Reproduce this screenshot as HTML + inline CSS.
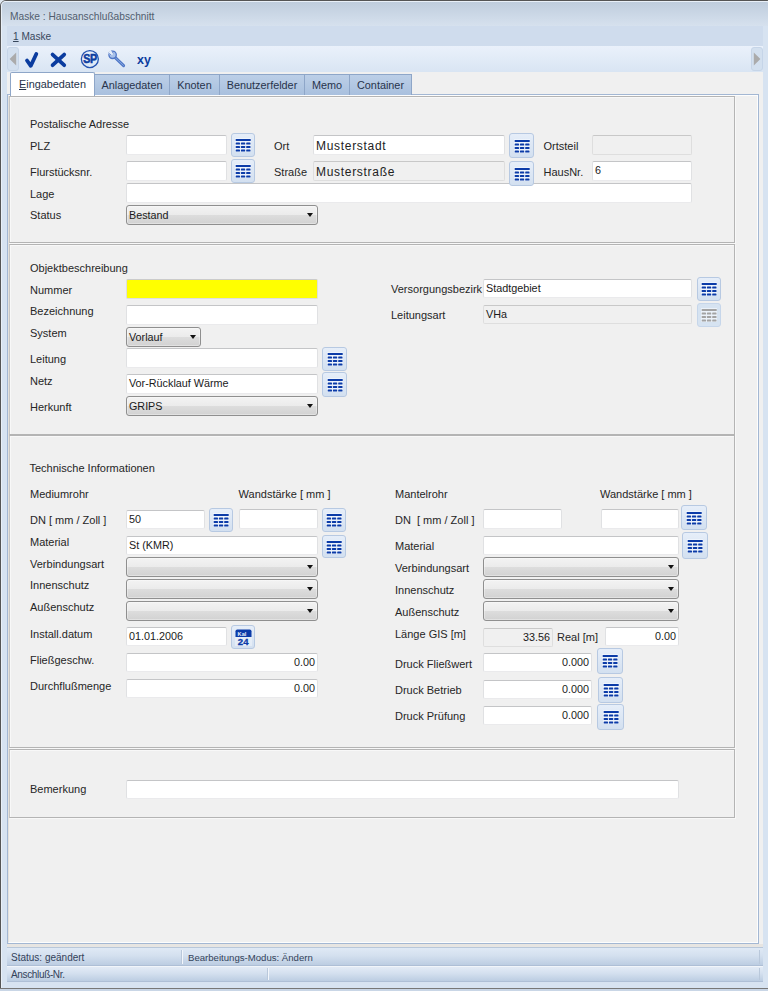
<!DOCTYPE html>
<html><head><meta charset="utf-8"><style>
*{box-sizing:border-box;margin:0;padding:0}
html,body{width:768px;height:991px;overflow:hidden;background:#d9e4f1;font-family:"Liberation Sans",sans-serif}
div,span,i{position:absolute}
.lb{font-size:11px;line-height:13px;color:#262626;white-space:nowrap}
.in{background:#fff;border:1px solid #e0e1e3;border-top-color:#c4c5c7;border-bottom-color:#eaeaec;border-radius:2px}
.in.dis{background:#f0f0f0;border-color:#dedede;border-top-color:#c8c8c8}
.in.yel{background:#ffff00;border-color:#dedede;border-top-color:#cbcbcb}
.v{top:1px;font-size:10.8px;line-height:15px;color:#1a1a1a;white-space:nowrap}
.big .v{font-size:12px;letter-spacing:0.7px;color:#222;top:3px;left:2px!important}
.bt{z-index:2;border:1px solid #b7c9e2;border-radius:3px;background:linear-gradient(#e6eef9,#d3e0f0);display:flex;align-items:center;justify-content:center}
.bt svg{position:static}
.bt.dis{background:#d6e3f1;border-color:#c6d6ea}
.cb{border:1px solid #8f8f8f;border-radius:3px;background:linear-gradient(#f3f3f3 0%,#ebebeb 50%,#dddddd 50%,#d2d2d2 100%);box-shadow:inset 0 0 0 1px rgba(255,255,255,0.35)}
.cv{left:2px;top:2px;font-size:10.75px;line-height:14px;color:#1a1a1a;white-space:nowrap}
.ar{right:4px;top:7px;width:0;height:0;border-left:3.5px solid transparent;border-right:3.5px solid transparent;border-top:4px solid #111}
.pg{border:1px solid #b4b4b4;border-left-color:#c6c6c6}
.tab{top:74px;height:21px;border:1px solid #8ea6c8;border-bottom:none;background:linear-gradient(#bccfe7,#a9c0de);font-size:10.85px;line-height:20px;color:#28344c;text-align:center;white-space:nowrap}
.pw{border:1px solid #f8f8f8}
</style></head>
<body>
<!-- window frame -->
<div style="left:0;top:0;width:768px;height:991px;background:#dfe7f0"></div>
<div style="left:0;top:0;width:773px;height:989px;border:1px solid #555;border-radius:6px 6px 0 0;background:#d7e3f1"></div>
<div style="left:1px;top:1px;width:771px;height:987px;border:1px solid #e9f0f8;border-bottom:none;border-radius:5px 5px 0 0"></div>
<!-- title bar -->
<div style="left:2px;top:2px;width:768px;height:24px;background:linear-gradient(#bfcddd,#d6e1ee);border-radius:4px 4px 0 0"></div>
<div style="left:10px;top:10px;font-size:10.2px;line-height:14px;color:#515d6e;white-space:nowrap">Maske : Hausanschlußabschnitt</div>
<!-- menu -->
<div style="left:7px;top:26px;width:756px;height:20px;background:#cfdced"></div>
<div style="left:13px;top:29.5px;font-size:10.1px;line-height:14px;color:#37475c;white-space:nowrap"><u>1</u> Maske</div>
<!-- toolbar -->
<div style="left:7px;top:46px;width:756px;height:26px;background:linear-gradient(#eaf1fb,#d9e5f3)"></div>
<!-- content bg -->
<div style="left:7px;top:72px;width:756px;height:875px;background:#f0f0f0"></div>
<!-- tab page -->
<div style="left:7px;top:94px;width:752px;height:850px;border:1px solid #a3b7d3;background:#f0f0f0"></div>
<div style="left:8px;top:95px;width:750px;height:848px;border:1px solid #fdfdfd;border-left-color:#e3e1dd"></div>
<!-- toolbar items -->
<div style="left:7px;top:47px;width:12px;height:24px;border:1px solid #c6d5e8;border-radius:3px;background:#d3e0ef"></div>
<svg style="position:absolute;left:0;top:0" width="768" height="100" viewBox="0 0 768 100">
<polygon points="16.2,52.6 16.2,65.4 9.6,59" fill="#ababab"/>
<polyline points="27,60.5 30.8,65.8 36.3,54" fill="none" stroke="#0b3c9f" stroke-width="3.8" stroke-linecap="round" stroke-linejoin="round"/>
<line x1="52.6" y1="54.6" x2="64.2" y2="65.2" stroke="#0b3c9f" stroke-width="3.8" stroke-linecap="round"/>
<line x1="64.2" y1="54.6" x2="52.6" y2="65.2" stroke="#0b3c9f" stroke-width="3.8" stroke-linecap="round"/>
<circle cx="89.85" cy="59.05" r="8.5" fill="none" stroke="#2352b0" stroke-width="1.3"/>
<text transform="translate(89.9,63.3) scale(0.86,1)" text-anchor="middle" font-family="Liberation Sans" font-weight="bold" font-size="12.4" fill="#0b3c9f" stroke="#0b3c9f" stroke-width="0.55" letter-spacing="-0.4">SP</text>
<line x1="115" y1="57.4" x2="123.6" y2="65.6" stroke="#4f76c6" stroke-width="3" stroke-linecap="round"/>
<line x1="115" y1="57.4" x2="123.4" y2="65.4" stroke="#86a8e0" stroke-width="1" stroke-linecap="round"/>
<circle cx="112.6" cy="54.8" r="3.7" fill="#a9c2ea" stroke="#4f76c6" stroke-width="1.3"/>
<path d="M107.8 53.4 L111.6 55.6 L113.6 53.6 L111.2 49.8 Z" fill="#e6eef9"/>
<path d="M108.3 52.9 L111.4 55.1" stroke="#4f76c6" stroke-width="0.8"/>
<path d="M111.6 50.4 L113.3 53.6" stroke="#4f76c6" stroke-width="0.8"/>
<text x="137" y="63.8" font-family="Liberation Sans" font-weight="bold" font-size="12.5" fill="#0b3c9f">xy</text>
</svg>
<div style="left:751px;top:47px;width:12px;height:24px;border:1px solid #c6d5e8;border-radius:3px;background:#d3e0ef"></div>
<svg style="position:absolute;left:0;top:0" width="768" height="100"><polygon points="753.8,52.6 753.8,65.4 760.4,59" fill="#ababab"/></svg>
<!-- tabs -->
<div style="left:7px;top:72px;width:752px;height:22px;background:#f0f0f0"></div>
<div class="tab" style="left:94px;width:76px">Anlagedaten</div>
<div class="tab" style="left:169px;width:51px">Knoten</div>
<div class="tab" style="left:219px;width:86px">Benutzerfelder</div>
<div class="tab" style="left:304px;width:46px">Memo</div>
<div class="tab" style="left:349px;width:63px">Container</div>
<div style="left:10px;top:72px;width:85px;height:24px;background:#fff;border:1px solid #8ea6c8;border-bottom:none;border-radius:2px 2px 0 0"></div>
<div style="left:19px;top:77px;font-size:10.85px;line-height:14px;color:#26324a;white-space:nowrap"><u>E</u>ingabedaten</div>

<div class="pw" style="left:10px;top:97px;width:726px;height:147px"></div>
<div class="pg" style="left:9px;top:96px;width:726px;height:147px"></div>
<div class="pw" style="left:10px;top:245px;width:726px;height:191px"></div>
<div class="pg" style="left:9px;top:244px;width:726px;height:191px"></div>
<div class="pw" style="left:10px;top:436px;width:726px;height:313px"></div>
<div class="pg" style="left:9px;top:435px;width:726px;height:313px"></div>
<div class="pw" style="left:10px;top:750px;width:726px;height:69px"></div>
<div class="pg" style="left:9px;top:749px;width:726px;height:69px"></div>
<div class="lb" style="left:30px;top:117.8px;">Postalische Adresse</div>
<div class="lb" style="left:30px;top:139.8px;">PLZ</div>
<div class="in" style="left:126px;top:135px;width:101px;height:20px;"></div>
<div class="bt" style="left:231px;top:133px;width:24px;height:24px"><svg width="16" height="14" viewBox="0 0 16 14"><rect x="0" y="0" width="16" height="14" fill="#f4f8fd" opacity="0.7"/><rect x="0.7" y="1" width="15" height="2" fill="#0b3ba8"/><g fill="#0b3ba8"><rect x="0.7" y="4.6" width="4.3" height="2" rx="0.6"/><rect x="5.9" y="4.6" width="4.3" height="2" rx="0.6"/><rect x="11.2" y="4.6" width="4.3" height="2" rx="0.6"/><rect x="0.7" y="8.0" width="4.3" height="2" rx="0.6"/><rect x="5.9" y="8.0" width="4.3" height="2" rx="0.6"/><rect x="11.2" y="8.0" width="4.3" height="2" rx="0.6"/><rect x="0.7" y="11.6" width="4.3" height="2" rx="0.6"/><rect x="5.9" y="11.6" width="4.3" height="2" rx="0.6"/><rect x="11.2" y="11.6" width="4.3" height="2" rx="0.6"/></g></svg></div>
<div class="lb" style="left:274px;top:139.8px;">Ort</div>
<div class="in big" style="left:313px;top:135px;width:192px;height:20px;"><span class="v" style="left:2px">Musterstadt</span></div>
<div class="bt" style="left:509px;top:133px;width:25px;height:25px"><svg width="16" height="14" viewBox="0 0 16 14"><rect x="0" y="0" width="16" height="14" fill="#f4f8fd" opacity="0.7"/><rect x="0.7" y="1" width="15" height="2" fill="#0b3ba8"/><g fill="#0b3ba8"><rect x="0.7" y="4.6" width="4.3" height="2" rx="0.6"/><rect x="5.9" y="4.6" width="4.3" height="2" rx="0.6"/><rect x="11.2" y="4.6" width="4.3" height="2" rx="0.6"/><rect x="0.7" y="8.0" width="4.3" height="2" rx="0.6"/><rect x="5.9" y="8.0" width="4.3" height="2" rx="0.6"/><rect x="11.2" y="8.0" width="4.3" height="2" rx="0.6"/><rect x="0.7" y="11.6" width="4.3" height="2" rx="0.6"/><rect x="5.9" y="11.6" width="4.3" height="2" rx="0.6"/><rect x="11.2" y="11.6" width="4.3" height="2" rx="0.6"/></g></svg></div>
<div class="lb" style="left:543.5px;top:139.8px;">Ortsteil</div>
<div class="in dis" style="left:592px;top:135px;width:100px;height:20px;"></div>
<div class="lb" style="left:30px;top:165.8px;">Flurstücksnr.</div>
<div class="in" style="left:126px;top:161px;width:101px;height:20px;"></div>
<div class="bt" style="left:231px;top:159px;width:24px;height:24px"><svg width="16" height="14" viewBox="0 0 16 14"><rect x="0" y="0" width="16" height="14" fill="#f4f8fd" opacity="0.7"/><rect x="0.7" y="1" width="15" height="2" fill="#0b3ba8"/><g fill="#0b3ba8"><rect x="0.7" y="4.6" width="4.3" height="2" rx="0.6"/><rect x="5.9" y="4.6" width="4.3" height="2" rx="0.6"/><rect x="11.2" y="4.6" width="4.3" height="2" rx="0.6"/><rect x="0.7" y="8.0" width="4.3" height="2" rx="0.6"/><rect x="5.9" y="8.0" width="4.3" height="2" rx="0.6"/><rect x="11.2" y="8.0" width="4.3" height="2" rx="0.6"/><rect x="0.7" y="11.6" width="4.3" height="2" rx="0.6"/><rect x="5.9" y="11.6" width="4.3" height="2" rx="0.6"/><rect x="11.2" y="11.6" width="4.3" height="2" rx="0.6"/></g></svg></div>
<div class="lb" style="left:274px;top:166.0px;">Straße</div>
<div class="in dis big" style="left:313px;top:161px;width:192px;height:20px;"><span class="v" style="left:2px">Musterstraße</span></div>
<div class="bt" style="left:509px;top:161px;width:25px;height:25px"><svg width="16" height="14" viewBox="0 0 16 14"><rect x="0" y="0" width="16" height="14" fill="#f4f8fd" opacity="0.7"/><rect x="0.7" y="1" width="15" height="2" fill="#0b3ba8"/><g fill="#0b3ba8"><rect x="0.7" y="4.6" width="4.3" height="2" rx="0.6"/><rect x="5.9" y="4.6" width="4.3" height="2" rx="0.6"/><rect x="11.2" y="4.6" width="4.3" height="2" rx="0.6"/><rect x="0.7" y="8.0" width="4.3" height="2" rx="0.6"/><rect x="5.9" y="8.0" width="4.3" height="2" rx="0.6"/><rect x="11.2" y="8.0" width="4.3" height="2" rx="0.6"/><rect x="0.7" y="11.6" width="4.3" height="2" rx="0.6"/><rect x="5.9" y="11.6" width="4.3" height="2" rx="0.6"/><rect x="11.2" y="11.6" width="4.3" height="2" rx="0.6"/></g></svg></div>
<div class="lb" style="left:543.5px;top:165.8px;">HausNr.</div>
<div class="in" style="left:592px;top:161px;width:100px;height:20px;"><span class="v" style="left:2px">6</span></div>
<div class="lb" style="left:30px;top:187.8px;">Lage</div>
<div class="in" style="left:126px;top:183px;width:566px;height:20px;"></div>
<div class="lb" style="left:30px;top:209.4px;">Status</div>
<div class="cb" style="left:126px;top:205px;width:192px;height:20px"><span class="cv">Bestand</span><i class="ar"></i></div>
<div class="lb" style="left:30px;top:261.8px;">Objektbeschreibung</div>
<div class="lb" style="left:30px;top:283.8px;">Nummer</div>
<div class="in yel" style="left:126px;top:279px;width:192px;height:20px;"></div>
<div class="lb" style="left:30px;top:305.3px;">Bezeichnung</div>
<div class="in" style="left:126px;top:305px;width:192px;height:20px;"></div>
<div class="lb" style="left:30px;top:326.8px;">System</div>
<div class="cb" style="left:126px;top:327px;width:75px;height:20px"><span class="cv">Vorlauf</span><i class="ar"></i></div>
<div class="lb" style="left:30px;top:353.2px;">Leitung</div>
<div class="in" style="left:126px;top:348px;width:192px;height:20px;"></div>
<div class="bt" style="left:322px;top:347px;width:25px;height:24px"><svg width="16" height="14" viewBox="0 0 16 14"><rect x="0" y="0" width="16" height="14" fill="#f4f8fd" opacity="0.7"/><rect x="0.7" y="1" width="15" height="2" fill="#0b3ba8"/><g fill="#0b3ba8"><rect x="0.7" y="4.6" width="4.3" height="2" rx="0.6"/><rect x="5.9" y="4.6" width="4.3" height="2" rx="0.6"/><rect x="11.2" y="4.6" width="4.3" height="2" rx="0.6"/><rect x="0.7" y="8.0" width="4.3" height="2" rx="0.6"/><rect x="5.9" y="8.0" width="4.3" height="2" rx="0.6"/><rect x="11.2" y="8.0" width="4.3" height="2" rx="0.6"/><rect x="0.7" y="11.6" width="4.3" height="2" rx="0.6"/><rect x="5.9" y="11.6" width="4.3" height="2" rx="0.6"/><rect x="11.2" y="11.6" width="4.3" height="2" rx="0.6"/></g></svg></div>
<div class="lb" style="left:30px;top:374.8px;">Netz</div>
<div class="in" style="left:126px;top:374px;width:192px;height:20px;"><span class="v" style="left:2px">Vor-Rücklauf Wärme</span></div>
<div class="bt" style="left:322px;top:372px;width:25px;height:25px"><svg width="16" height="14" viewBox="0 0 16 14"><rect x="0" y="0" width="16" height="14" fill="#f4f8fd" opacity="0.7"/><rect x="0.7" y="1" width="15" height="2" fill="#0b3ba8"/><g fill="#0b3ba8"><rect x="0.7" y="4.6" width="4.3" height="2" rx="0.6"/><rect x="5.9" y="4.6" width="4.3" height="2" rx="0.6"/><rect x="11.2" y="4.6" width="4.3" height="2" rx="0.6"/><rect x="0.7" y="8.0" width="4.3" height="2" rx="0.6"/><rect x="5.9" y="8.0" width="4.3" height="2" rx="0.6"/><rect x="11.2" y="8.0" width="4.3" height="2" rx="0.6"/><rect x="0.7" y="11.6" width="4.3" height="2" rx="0.6"/><rect x="5.9" y="11.6" width="4.3" height="2" rx="0.6"/><rect x="11.2" y="11.6" width="4.3" height="2" rx="0.6"/></g></svg></div>
<div class="lb" style="left:30px;top:401.1px;">Herkunft</div>
<div class="cb" style="left:126px;top:396px;width:192px;height:20px"><span class="cv">GRIPS</span><i class="ar"></i></div>
<div class="lb" style="left:391px;top:283.3px;">Versorgungsbezirk</div>
<div class="in" style="left:483px;top:279px;width:209px;height:19px;"><span class="v" style="left:2px">Stadtgebiet</span></div>
<div class="bt" style="left:697px;top:277px;width:24px;height:24px"><svg width="16" height="14" viewBox="0 0 16 14"><rect x="0" y="0" width="16" height="14" fill="#f4f8fd" opacity="0.7"/><rect x="0.7" y="1" width="15" height="2" fill="#0b3ba8"/><g fill="#0b3ba8"><rect x="0.7" y="4.6" width="4.3" height="2" rx="0.6"/><rect x="5.9" y="4.6" width="4.3" height="2" rx="0.6"/><rect x="11.2" y="4.6" width="4.3" height="2" rx="0.6"/><rect x="0.7" y="8.0" width="4.3" height="2" rx="0.6"/><rect x="5.9" y="8.0" width="4.3" height="2" rx="0.6"/><rect x="11.2" y="8.0" width="4.3" height="2" rx="0.6"/><rect x="0.7" y="11.6" width="4.3" height="2" rx="0.6"/><rect x="5.9" y="11.6" width="4.3" height="2" rx="0.6"/><rect x="11.2" y="11.6" width="4.3" height="2" rx="0.6"/></g></svg></div>
<div class="lb" style="left:391px;top:309.0px;">Leitungsart</div>
<div class="in dis" style="left:483px;top:305px;width:209px;height:19px;"><span class="v" style="left:2px">VHa</span></div>
<div class="bt dis" style="left:697px;top:303px;width:24px;height:24px"><svg width="16" height="14" viewBox="0 0 16 14"><rect x="0" y="0" width="16" height="14" fill="#f4f8fd" opacity="0.7"/><rect x="0.7" y="1" width="15" height="2" fill="#a3a3a3"/><g fill="#a3a3a3"><rect x="0.7" y="4.6" width="4.3" height="2" rx="0.6"/><rect x="5.9" y="4.6" width="4.3" height="2" rx="0.6"/><rect x="11.2" y="4.6" width="4.3" height="2" rx="0.6"/><rect x="0.7" y="8.0" width="4.3" height="2" rx="0.6"/><rect x="5.9" y="8.0" width="4.3" height="2" rx="0.6"/><rect x="11.2" y="8.0" width="4.3" height="2" rx="0.6"/><rect x="0.7" y="11.6" width="4.3" height="2" rx="0.6"/><rect x="5.9" y="11.6" width="4.3" height="2" rx="0.6"/><rect x="11.2" y="11.6" width="4.3" height="2" rx="0.6"/></g></svg></div>
<div class="lb" style="left:29.5px;top:461.8px;">Technische Informationen</div>
<div class="lb" style="left:30px;top:488.3px;">Mediumrohr</div>
<div class="lb" style="left:238.6px;top:488.4px;">Wandstärke [ mm ]</div>
<div class="lb" style="left:30px;top:514.3px;">DN [ mm / Zoll ]</div>
<div class="in" style="left:126px;top:510px;width:79px;height:19px;"><span class="v" style="left:2px">50</span></div>
<div class="bt" style="left:209px;top:508px;width:24px;height:24px"><svg width="16" height="14" viewBox="0 0 16 14"><rect x="0" y="0" width="16" height="14" fill="#f4f8fd" opacity="0.7"/><rect x="0.7" y="1" width="15" height="2" fill="#0b3ba8"/><g fill="#0b3ba8"><rect x="0.7" y="4.6" width="4.3" height="2" rx="0.6"/><rect x="5.9" y="4.6" width="4.3" height="2" rx="0.6"/><rect x="11.2" y="4.6" width="4.3" height="2" rx="0.6"/><rect x="0.7" y="8.0" width="4.3" height="2" rx="0.6"/><rect x="5.9" y="8.0" width="4.3" height="2" rx="0.6"/><rect x="11.2" y="8.0" width="4.3" height="2" rx="0.6"/><rect x="0.7" y="11.6" width="4.3" height="2" rx="0.6"/><rect x="5.9" y="11.6" width="4.3" height="2" rx="0.6"/><rect x="11.2" y="11.6" width="4.3" height="2" rx="0.6"/></g></svg></div>
<div class="in" style="left:239px;top:509px;width:79px;height:20px;"></div>
<div class="bt" style="left:322px;top:508px;width:24px;height:24px"><svg width="16" height="14" viewBox="0 0 16 14"><rect x="0" y="0" width="16" height="14" fill="#f4f8fd" opacity="0.7"/><rect x="0.7" y="1" width="15" height="2" fill="#0b3ba8"/><g fill="#0b3ba8"><rect x="0.7" y="4.6" width="4.3" height="2" rx="0.6"/><rect x="5.9" y="4.6" width="4.3" height="2" rx="0.6"/><rect x="11.2" y="4.6" width="4.3" height="2" rx="0.6"/><rect x="0.7" y="8.0" width="4.3" height="2" rx="0.6"/><rect x="5.9" y="8.0" width="4.3" height="2" rx="0.6"/><rect x="11.2" y="8.0" width="4.3" height="2" rx="0.6"/><rect x="0.7" y="11.6" width="4.3" height="2" rx="0.6"/><rect x="5.9" y="11.6" width="4.3" height="2" rx="0.6"/><rect x="11.2" y="11.6" width="4.3" height="2" rx="0.6"/></g></svg></div>
<div class="lb" style="left:30px;top:536.1px;">Material</div>
<div class="in" style="left:126px;top:536px;width:192px;height:19px;"><span class="v" style="left:2px">St (KMR)</span></div>
<div class="bt" style="left:322px;top:535px;width:24px;height:23px"><svg width="16" height="14" viewBox="0 0 16 14"><rect x="0" y="0" width="16" height="14" fill="#f4f8fd" opacity="0.7"/><rect x="0.7" y="1" width="15" height="2" fill="#0b3ba8"/><g fill="#0b3ba8"><rect x="0.7" y="4.6" width="4.3" height="2" rx="0.6"/><rect x="5.9" y="4.6" width="4.3" height="2" rx="0.6"/><rect x="11.2" y="4.6" width="4.3" height="2" rx="0.6"/><rect x="0.7" y="8.0" width="4.3" height="2" rx="0.6"/><rect x="5.9" y="8.0" width="4.3" height="2" rx="0.6"/><rect x="11.2" y="8.0" width="4.3" height="2" rx="0.6"/><rect x="0.7" y="11.6" width="4.3" height="2" rx="0.6"/><rect x="5.9" y="11.6" width="4.3" height="2" rx="0.6"/><rect x="11.2" y="11.6" width="4.3" height="2" rx="0.6"/></g></svg></div>
<div class="lb" style="left:30px;top:557.8px;">Verbindungsart</div>
<div class="cb" style="left:126px;top:557px;width:192px;height:20px"><i class="ar"></i></div>
<div class="lb" style="left:30px;top:579.3px;">Innenschutz</div>
<div class="cb" style="left:126px;top:579px;width:192px;height:20px"><i class="ar"></i></div>
<div class="lb" style="left:30px;top:600.8px;">Außenschutz</div>
<div class="cb" style="left:126px;top:601px;width:192px;height:20px"><i class="ar"></i></div>
<div class="lb" style="left:30px;top:627.6px;">Install.datum</div>
<div class="in" style="left:126px;top:627px;width:101px;height:19px;"><span class="v" style="left:2px">01.01.2006</span></div>
<div class="bt" style="left:231px;top:625px;width:24px;height:24px"><svg width="17" height="17" viewBox="0 0 17 17"><rect x="0" y="8" width="17" height="9" fill="#eef3fa" opacity="0.6"/><path d="M0.5 2.2 Q0.5 0.4 2.3 0.4 H14.7 Q16.5 0.4 16.5 2.2 V8.1 H0.5 Z" fill="#0b3ba8"/><text x="2.6" y="6.6" font-family="Liberation Sans" font-weight="bold" font-size="5.6" fill="#e8eef8">Kal</text><text x="8.2" y="16.3" text-anchor="middle" font-family="Liberation Sans" font-weight="bold" font-size="9.6" fill="#0b3ba8" stroke="#0b3ba8" stroke-width="0.3">24</text></svg></div>
<div class="lb" style="left:30px;top:653.6px;">Fließgeschw.</div>
<div class="in" style="left:126px;top:653px;width:192px;height:19px;"><span class="v" style="right:2px">0.00</span></div>
<div class="lb" style="left:30px;top:679.6px;">Durchflußmenge</div>
<div class="in" style="left:126px;top:679px;width:192px;height:19px;"><span class="v" style="right:2px">0.00</span></div>
<div class="lb" style="left:395px;top:488.1px;">Mantelrohr</div>
<div class="lb" style="left:600px;top:487.8px;">Wandstärke [ mm ]</div>
<div class="lb" style="left:395px;top:514.3px;">DN&nbsp; [ mm / Zoll ]</div>
<div class="in" style="left:483px;top:509px;width:79px;height:20px;"></div>
<div class="in" style="left:601px;top:509px;width:78px;height:20px;"></div>
<div class="bt" style="left:681px;top:505px;width:26px;height:25px"><svg width="16" height="14" viewBox="0 0 16 14"><rect x="0" y="0" width="16" height="14" fill="#f4f8fd" opacity="0.7"/><rect x="0.7" y="1" width="15" height="2" fill="#0b3ba8"/><g fill="#0b3ba8"><rect x="0.7" y="4.6" width="4.3" height="2" rx="0.6"/><rect x="5.9" y="4.6" width="4.3" height="2" rx="0.6"/><rect x="11.2" y="4.6" width="4.3" height="2" rx="0.6"/><rect x="0.7" y="8.0" width="4.3" height="2" rx="0.6"/><rect x="5.9" y="8.0" width="4.3" height="2" rx="0.6"/><rect x="11.2" y="8.0" width="4.3" height="2" rx="0.6"/><rect x="0.7" y="11.6" width="4.3" height="2" rx="0.6"/><rect x="5.9" y="11.6" width="4.3" height="2" rx="0.6"/><rect x="11.2" y="11.6" width="4.3" height="2" rx="0.6"/></g></svg></div>
<div class="lb" style="left:395px;top:540.3px;">Material</div>
<div class="in" style="left:483px;top:536px;width:196px;height:19px;"></div>
<div class="bt" style="left:682px;top:532px;width:26px;height:27px"><svg width="16" height="14" viewBox="0 0 16 14"><rect x="0" y="0" width="16" height="14" fill="#f4f8fd" opacity="0.7"/><rect x="0.7" y="1" width="15" height="2" fill="#0b3ba8"/><g fill="#0b3ba8"><rect x="0.7" y="4.6" width="4.3" height="2" rx="0.6"/><rect x="5.9" y="4.6" width="4.3" height="2" rx="0.6"/><rect x="11.2" y="4.6" width="4.3" height="2" rx="0.6"/><rect x="0.7" y="8.0" width="4.3" height="2" rx="0.6"/><rect x="5.9" y="8.0" width="4.3" height="2" rx="0.6"/><rect x="11.2" y="8.0" width="4.3" height="2" rx="0.6"/><rect x="0.7" y="11.6" width="4.3" height="2" rx="0.6"/><rect x="5.9" y="11.6" width="4.3" height="2" rx="0.6"/><rect x="11.2" y="11.6" width="4.3" height="2" rx="0.6"/></g></svg></div>
<div class="lb" style="left:395px;top:561.8px;">Verbindungsart</div>
<div class="cb" style="left:483px;top:557px;width:196px;height:20px"><i class="ar"></i></div>
<div class="lb" style="left:395px;top:583.8px;">Innenschutz</div>
<div class="cb" style="left:483px;top:579px;width:196px;height:20px"><i class="ar"></i></div>
<div class="lb" style="left:395px;top:605.8px;">Außenschutz</div>
<div class="cb" style="left:483px;top:601px;width:196px;height:20px"><i class="ar"></i></div>
<div class="lb" style="left:395px;top:627.6px;">Länge GIS [m]</div>
<div class="in dis" style="left:483px;top:628px;width:70px;height:19px;"><span class="v" style="right:2px">33.56</span></div>
<div class="lb" style="left:557px;top:631.3px;">Real [m]</div>
<div class="in" style="left:605px;top:627px;width:74px;height:19px;"><span class="v" style="right:2px">0.00</span></div>
<div class="lb" style="left:395px;top:657.5px;">Druck Fließwert</div>
<div class="in" style="left:483px;top:653px;width:109px;height:19px;"><span class="v" style="right:2px">0.000</span></div>
<div class="bt" style="left:597px;top:648px;width:26px;height:26px"><svg width="16" height="14" viewBox="0 0 16 14"><rect x="0" y="0" width="16" height="14" fill="#f4f8fd" opacity="0.7"/><rect x="0.7" y="1" width="15" height="2" fill="#0b3ba8"/><g fill="#0b3ba8"><rect x="0.7" y="4.6" width="4.3" height="2" rx="0.6"/><rect x="5.9" y="4.6" width="4.3" height="2" rx="0.6"/><rect x="11.2" y="4.6" width="4.3" height="2" rx="0.6"/><rect x="0.7" y="8.0" width="4.3" height="2" rx="0.6"/><rect x="5.9" y="8.0" width="4.3" height="2" rx="0.6"/><rect x="11.2" y="8.0" width="4.3" height="2" rx="0.6"/><rect x="0.7" y="11.6" width="4.3" height="2" rx="0.6"/><rect x="5.9" y="11.6" width="4.3" height="2" rx="0.6"/><rect x="11.2" y="11.6" width="4.3" height="2" rx="0.6"/></g></svg></div>
<div class="lb" style="left:395px;top:683.5px;">Druck Betrieb</div>
<div class="in" style="left:483px;top:680px;width:109px;height:19px;"><span class="v" style="right:2px">0.000</span></div>
<div class="bt" style="left:598px;top:677px;width:25px;height:26px"><svg width="16" height="14" viewBox="0 0 16 14"><rect x="0" y="0" width="16" height="14" fill="#f4f8fd" opacity="0.7"/><rect x="0.7" y="1" width="15" height="2" fill="#0b3ba8"/><g fill="#0b3ba8"><rect x="0.7" y="4.6" width="4.3" height="2" rx="0.6"/><rect x="5.9" y="4.6" width="4.3" height="2" rx="0.6"/><rect x="11.2" y="4.6" width="4.3" height="2" rx="0.6"/><rect x="0.7" y="8.0" width="4.3" height="2" rx="0.6"/><rect x="5.9" y="8.0" width="4.3" height="2" rx="0.6"/><rect x="11.2" y="8.0" width="4.3" height="2" rx="0.6"/><rect x="0.7" y="11.6" width="4.3" height="2" rx="0.6"/><rect x="5.9" y="11.6" width="4.3" height="2" rx="0.6"/><rect x="11.2" y="11.6" width="4.3" height="2" rx="0.6"/></g></svg></div>
<div class="lb" style="left:395px;top:709.6px;">Druck Prüfung</div>
<div class="in" style="left:483px;top:706px;width:109px;height:19px;"><span class="v" style="right:2px">0.000</span></div>
<div class="bt" style="left:597px;top:704px;width:27px;height:26px"><svg width="16" height="14" viewBox="0 0 16 14"><rect x="0" y="0" width="16" height="14" fill="#f4f8fd" opacity="0.7"/><rect x="0.7" y="1" width="15" height="2" fill="#0b3ba8"/><g fill="#0b3ba8"><rect x="0.7" y="4.6" width="4.3" height="2" rx="0.6"/><rect x="5.9" y="4.6" width="4.3" height="2" rx="0.6"/><rect x="11.2" y="4.6" width="4.3" height="2" rx="0.6"/><rect x="0.7" y="8.0" width="4.3" height="2" rx="0.6"/><rect x="5.9" y="8.0" width="4.3" height="2" rx="0.6"/><rect x="11.2" y="8.0" width="4.3" height="2" rx="0.6"/><rect x="0.7" y="11.6" width="4.3" height="2" rx="0.6"/><rect x="5.9" y="11.6" width="4.3" height="2" rx="0.6"/><rect x="11.2" y="11.6" width="4.3" height="2" rx="0.6"/></g></svg></div>
<div class="lb" style="left:30px;top:783.4px;">Bemerkung</div>
<div class="in" style="left:126px;top:780px;width:553px;height:19px;"></div>

<!-- status bars -->
<div style="left:7px;top:944px;width:756px;height:3px;background:#e7e5e2"></div>
<div style="left:7px;top:947px;width:756px;height:19px;background:linear-gradient(#dfe9f5,#d4e0ef 45%,#bccde2);border-top:1px solid #b8c7da;border-bottom:1px solid #aebfd6"></div>
<div style="left:181px;top:950px;width:1px;height:14px;background:#b9c8db"></div>
<div style="left:182px;top:950px;width:1px;height:14px;background:#f2f6fb"></div>
<div style="left:759px;top:950px;width:1px;height:14px;background:#b9c8db"></div>
<div style="left:11px;top:951px;font-size:10px;line-height:13px;color:#33425a;white-space:nowrap">Status: geändert</div>
<div style="left:188px;top:951px;font-size:9.6px;line-height:13px;color:#33425a;white-space:nowrap">Bearbeitungs-Modus: Ändern</div>
<div style="left:7px;top:966px;width:756px;height:16px;background:linear-gradient(#e3ebf6,#d4e0ef 45%,#bccde2);border-top:1px solid #f1f5fa;border-bottom:1px solid #aebfd6"></div>
<div style="left:267px;top:968px;width:1px;height:12px;background:#b9c8db"></div>
<div style="left:268px;top:968px;width:1px;height:12px;background:#f2f6fb"></div>
<div style="left:759px;top:968px;width:1px;height:12px;background:#b9c8db"></div>
<div style="left:11px;top:968px;font-size:10px;line-height:13px;color:#33425a;white-space:nowrap;letter-spacing:-0.35px">Anschluß-Nr.</div>
<div style="left:0;top:988px;width:768px;height:1px;background:#777"></div>
<div style="left:0;top:989px;width:768px;height:2px;background:#c9d6e6"></div>
</body></html>
